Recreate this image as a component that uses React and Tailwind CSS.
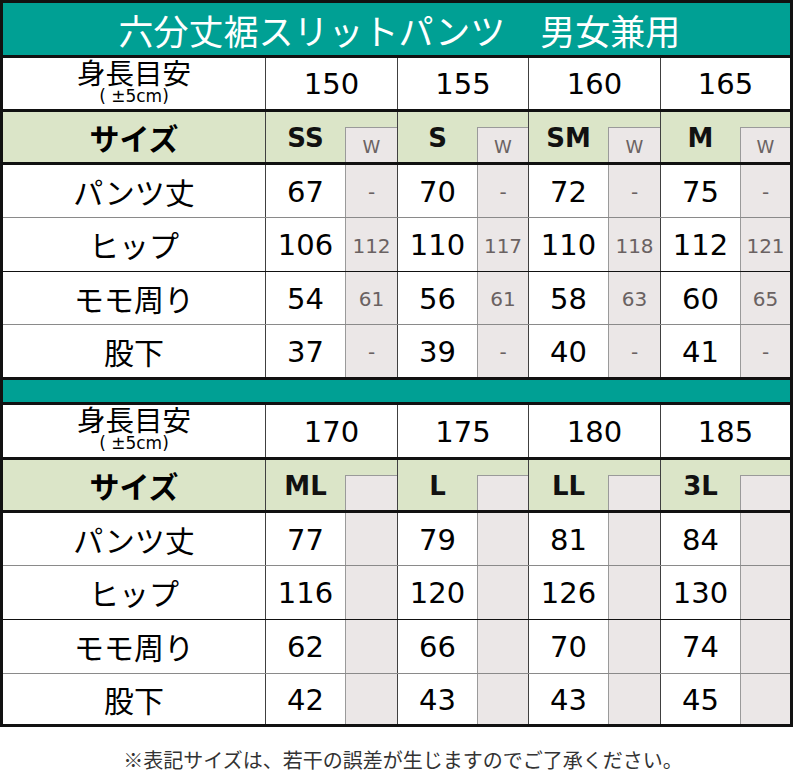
const JP = "font-['Noto_Sans_CJK_JP',sans-serif]";
const NUM = "font-['DejaVu_Sans','Noto_Sans_CJK_JP',sans-serif]";

// group widths incl. 1px left line, and the W column widths
const GROUP = ["w-[132px]", "w-[131px]", "w-[132px]", "w-[130px]"];
const WCOL = ["w-[52px]", "w-[51px]", "w-[52px]", "w-[50px]"];

const top = {
  heights: ["150", "155", "160", "165"],
  sizes: ["SS", "S", "SM", "M"],
  showW: true,
  rows: [
    { label: "パンツ丈", vals: [["67", "-"], ["70", "-"], ["72", "-"], ["75", "-"]] },
    { label: "ヒップ", vals: [["106", "112"], ["110", "117"], ["110", "118"], ["112", "121"]] },
    { label: "モモ周り", vals: [["54", "61"], ["56", "61"], ["58", "63"], ["60", "65"]] },
    { label: "股下", vals: [["37", "-"], ["39", "-"], ["40", "-"], ["41", "-"]] },
  ],
};

const bottom = {
  heights: ["170", "175", "180", "185"],
  sizes: ["ML", "L", "LL", "3L"],
  showW: false,
  rows: [
    { label: "パンツ丈", vals: [["77", ""], ["79", ""], ["81", ""], ["84", ""]] },
    { label: "ヒップ", vals: [["116", ""], ["120", ""], ["126", ""], ["130", ""]] },
    { label: "モモ周り", vals: [["62", ""], ["66", ""], ["70", ""], ["74", ""]] },
    { label: "股下", vals: [["42", ""], ["43", ""], ["43", ""], ["45", ""]] },
  ],
};

// row heights + bottom line styles for each block
const TOP_ROWS = [
  "h-[53px] border-b border-[#8a8a8a]",
  "h-[54px] border-b border-[#111]",
  "h-[53px] border-b border-[#8a8a8a]",
  "h-[55px] border-b-[3px] border-[#111]",
];
const BOTTOM_ROWS = [
  "h-[53px] border-b border-[#8a8a8a]",
  "h-[54px] border-b border-[#111]",
  "h-[54px] border-b border-[#8a8a8a]",
  "h-[50px]",
];

function HeightRow({ heights, cls }) {
  return (
    <div className={`flex ${cls} border-[#111] bg-white`}>
      <div className="w-[262px] flex flex-col items-center pt-[1px]">
        <div className={`${JP} text-[28.5px] text-black leading-[26px]`}>身長目安</div>
        <div className={`${NUM} text-[17px] text-black leading-[16px] mt-[3px]`}>( ±5cm)</div>
      </div>
      {heights.map((h, i) => (
        <div key={h} className={`${GROUP[i]} border-l border-[#404040] flex items-center justify-center pt-[3px]`}>
          <span className={`${NUM} text-[29px] text-black`}>{h}</span>
        </div>
      ))}
    </div>
  );
}

function SizeRow({ sizes, showW }) {
  return (
    <div className="flex h-[53px] border-b-[3px] border-[#111] bg-[#dbe5c8]">
      <div className="w-[262px] flex items-center justify-center">
        <span className={`${JP} text-[30px] font-bold text-black`}>サイズ</span>
      </div>
      {sizes.map((s, i) => (
        <div key={s} className={`${GROUP[i]} border-l border-[#404040] flex`}>
          <div className="w-[79px] flex items-center justify-center pt-[2px]">
            <span className={`${NUM} text-[26px] font-bold text-[#111]`}>{s}</span>
          </div>
          <div className={`${WCOL[i]} flex flex-col`}>
            <div className="h-[15px]" />
            <div className="flex-1 bg-[#ebe7e7] border-l border-t border-[#9a9a9a] flex items-center justify-center pt-[3px]">
              {showW && <span className={`${NUM} text-[18px] text-[#6a6262]`}>W</span>}
            </div>
          </div>
        </div>
      ))}
    </div>
  );
}

function DataRow({ row, cls }) {
  return (
    <div className={`flex ${cls} bg-white`}>
      <div className="w-[262px] flex items-center justify-center">
        <span className={`${JP} text-[30px] text-black`}>{row.label}</span>
      </div>
      {row.vals.map(([v, w], i) => (
        <div key={i} className={`${GROUP[i]} border-l border-[#404040] flex`}>
          <div className="w-[79px] flex items-center justify-center pt-[3px]">
            <span className={`${NUM} text-[29px] text-black`}>{v}</span>
          </div>
          <div className={`${WCOL[i]} bg-[#ebe7e7] border-l border-[#9a9a9a] flex items-center justify-center pt-[2px]`}>
            <span className={`${NUM} text-[20px] text-[#6a6262]`}>{w}</span>
          </div>
        </div>
      ))}
    </div>
  );
}

export default function App() {
  return (
    <div className="w-[794px] h-[777px] bg-white">
      <div className="w-[793px] border-[3px] border-[#111] box-border">
        {/* Title */}
        <div className="h-[55px] bg-[#00a094] border-b-[3px] border-[#111] flex items-center justify-center pl-[6px]">
          <span className={`${JP} text-[35px] text-white leading-none`}>六分丈裾スリットパンツ　男女兼用</span>
        </div>

        <HeightRow heights={top.heights} cls="h-[54px] border-b-[3px]" />
        <SizeRow sizes={top.sizes} showW={top.showW} />
        {top.rows.map((r, i) => (
          <DataRow key={r.label} row={r} cls={TOP_ROWS[i]} />
        ))}

        {/* Divider band */}
        <div className="h-[25px] bg-[#00a094] border-b-[3px] border-[#111]" />

        <HeightRow heights={bottom.heights} cls="h-[55px] border-b-[3px]" />
        <SizeRow sizes={bottom.sizes} showW={bottom.showW} />
        {bottom.rows.map((r, i) => (
          <DataRow key={r.label} row={r} cls={BOTTOM_ROWS[i]} />
        ))}
      </div>

      {/* Note */}
      <div className="flex justify-center pt-[23px] pl-[12px]">
        <span className={`${JP} text-[20px] text-[#333] leading-none`}>
          ※表記サイズは、若干の誤差が生じますのでご了承ください。
        </span>
      </div>
    </div>
  );
}
